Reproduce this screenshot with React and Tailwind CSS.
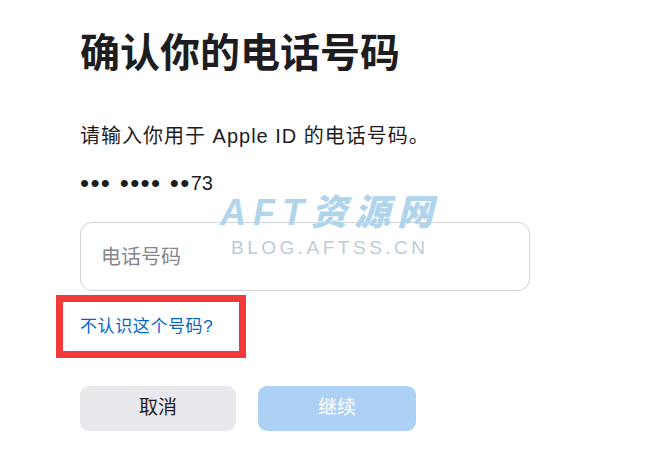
export default function App() {
  return (
    <div className="relative min-h-[452px] w-[658px] bg-white pl-[80px] pt-[29px] text-[#1d1d1f] [font-family:'Liberation_Sans','Noto_Sans_CJK_SC',sans-serif]">
      <h1 className="text-[40px] leading-[48px] font-bold">确认你的电话号码</h1>

      <p className="mt-[45px] text-[20px] leading-[28px] tracking-[1px]">请输入你用于 Apple ID 的电话号码。</p>

      <p className="mt-[19px] text-[20px] leading-[28px]">
        <span className="text-[26px] tracking-[1.3px] align-[-2px]">••• •••• ••</span>73
      </p>

      <div className="mt-[25px] flex h-[69px] w-[450px] items-center rounded-[12px] border border-[#d2d2d7] px-[20px]">
        <span className="text-[20px] text-[#86868b]">电话号码</span>
      </div>

      <div className="relative mt-[24px] w-fit">
        <a href="#" className="block text-[17px] leading-[24px] tracking-[0.6px] text-[#0066cc]">不认识这个号码?</a>
        <div className="absolute left-[-24px] top-[-20px] h-[63px] w-[190px] border-[7px] border-[#f23a3a]"></div>
      </div>

      <div className="mt-[47px] flex gap-[22px]">
        <button className="h-[45px] w-[156px] rounded-[9px] bg-[#e8e8ed] text-[19px] text-[#1d1d1f]">取消</button>
        <button className="h-[45px] w-[158px] rounded-[9px] bg-[#acd1f5] text-[19px] text-white">继续</button>
      </div>

      {/* watermark */}
      <div className="pointer-events-none absolute left-[220px] top-[192px] flex flex-col items-start">
        <span className="text-[36px] leading-[42px] font-black italic tracking-[7px] text-[#b0d4ec]">AFT资源网</span>
        <span className="ml-[11px] mt-[3px] text-[19px] leading-[22px] tracking-[3.5px] text-[#bccbd6]">BLOG.AFTSS.CN</span>
      </div>
    </div>
  )
}
